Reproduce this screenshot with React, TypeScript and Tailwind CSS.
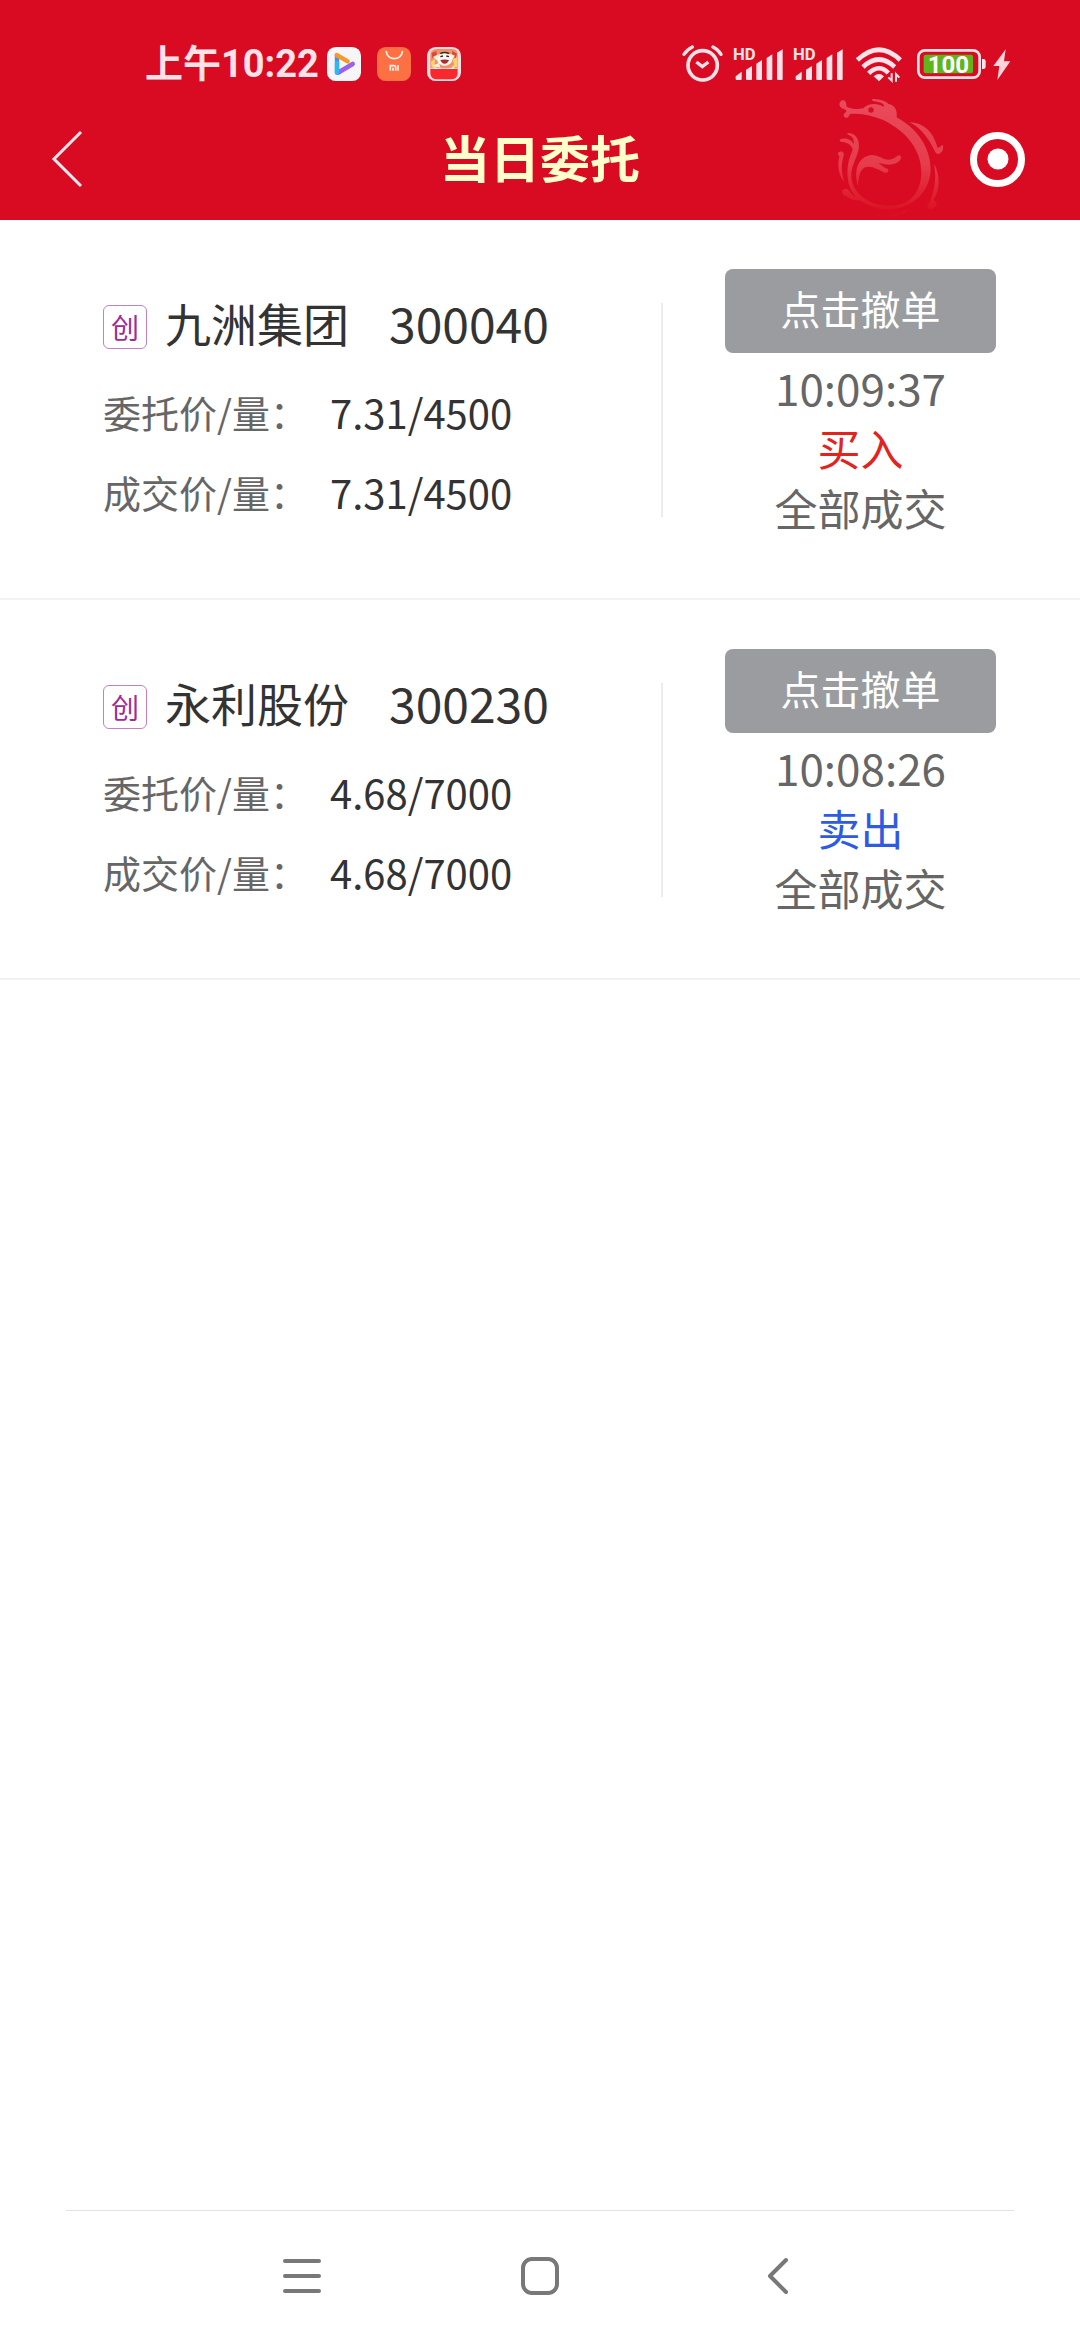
type Order = {
  name: string;
  code: string;
  entrust: string;
  deal: string;
  time: string;
  side: "买入" | "卖出";
  status: string;
};

const orders: Order[] = [
  { name: "九洲集团", code: "300040", entrust: "7.31/4500", deal: "7.31/4500", time: "10:09:37", side: "买入", status: "全部成交" },
  { name: "永利股份", code: "300230", entrust: "4.68/7000", deal: "4.68/7000", time: "10:08:26", side: "卖出", status: "全部成交" },
];

function VideoAppIcon() {
  return (
    <svg width="34" height="34" viewBox="0 0 102 102" aria-hidden="true">
      <rect width="102" height="102" rx="26" fill="#f6f5f7" />
      <path d="M30 26V76" stroke="#4a8cec" strokeWidth="13" strokeLinecap="round" />
      <path d="M33 77L77 51" stroke="#9a62e6" strokeWidth="14" strokeLinecap="round" />
      <path d="M29 24L62 43" stroke="#f79a2c" strokeWidth="13" strokeLinecap="round" />
      <path d="M30 48V77" stroke="#2fb6f2" strokeWidth="13" strokeLinecap="round" />
    </svg>
  );
}

function StoreAppIcon() {
  return (
    <svg width="34" height="34" viewBox="0 0 102 102" aria-hidden="true">
      <rect width="102" height="102" rx="26" fill="#fd7043" />
      <path d="M28 14C30 42 74 42 76 14" fill="none" stroke="#fff0e8" strokeWidth="5" strokeLinecap="round" />
      <path d="M40 71V56H51Q56 56 56 61V71M48 62V71M63 54V71" fill="none" stroke="#fff0e8" strokeWidth="5" />
    </svg>
  );
}

function GameAppIcon() {
  return (
    <svg width="34" height="34" viewBox="0 0 102 102" aria-hidden="true">
      <rect width="102" height="102" rx="26" fill="#f6dcdc" />
      <path d="M10 20Q14 6 30 6H74Q90 6 92 20V64H10Z" fill="#f0916a" />
      <path d="M10 66H92V80Q90 97 72 97H30Q12 97 10 80Z" fill="#f9282f" />
      <path d="M12 44L26 34L22 52L34 60L14 62ZM90 30L76 38L82 52L72 62L90 60Z" fill="#f8d26a" />
      <path d="M14 18L28 12L30 26L16 34ZM76 12L90 20L86 34L74 26Z" fill="#d94a36" />
      <path d="M18 30L34 22L30 40ZM84 26L70 20L74 40ZM16 56L36 48L40 62Z" fill="#fff1e6" />
      <ellipse cx="53" cy="36" rx="23" ry="20" fill="#fff5ee" />
      <path d="M38 18Q53 10 68 18L64 22Q53 16 42 22Z" fill="#3c2a28" />
      <path d="M40 29L48 27M58 27L66 29" stroke="#33211f" strokeWidth="4" />
      <path d="M40 39Q53 36 66 39Q62 50 53 50Q44 50 40 39Z" fill="#a82f2c" />
      <path d="M20 60Q52 72 82 60V66H20Z" fill="#fff1e6" />
    </svg>
  );
}

function AlarmIcon() {
  return (
    <svg width="42" height="40" viewBox="36 42 126 120" fill="none" stroke="#ffe1e8" aria-hidden="true">
      <circle cx="98" cy="106" r="44" strokeWidth="11" />
      <path d="M79 96L97 110L115 96" strokeWidth="10" />
      <path d="M42 73Q52 58 67 51M129 51Q144 58 153 73" strokeWidth="10" strokeLinecap="round" />
    </svg>
  );
}

function SignalIcon() {
  return (
    <svg width="52" height="40" viewBox="186 42 156 120" fill="#ffe1e8" role="img">
      <text x="189" y="90" fontSize="50" fontWeight="700" fontFamily="Roboto, sans-serif">HD</text>
      <path d="M197 147V139L215 125V147Q215 150 212 150H200Q197 150 197 147Z" />
      <path d="M228 147V119L246 108V147Q246 150 243 150H231Q228 150 228 147Z" />
      <path d="M259 147V101L276 90V147Q276 150 273 150H262Q259 150 259 147Z" />
      <path d="M290 147V84L307 73V147Q307 150 304 150H293Q290 150 290 147Z" />
      <path d="M321 147V68L338 58V147Q338 150 335 150H324Q321 150 321 147Z" />
    </svg>
  );
}

function WifiIcon() {
  return (
    <svg width="52" height="40" viewBox="546 42 156 120" fill="none" stroke="#ffe1e8" strokeWidth="14" aria-hidden="true">
      <path d="M562 90Q627 28 691 90" />
      <path d="M579 111Q627 66 674 111" />
      <path d="M596 130Q627 100 655 129" />
      <path d="M611 139Q627 125 642 139L627 154Z" fill="#ffe1e8" stroke="none" />
      <path d="M665 130V152L655 142M678 155V132L688 143" strokeWidth="6" />
    </svg>
  );
}

function BatteryIcon() {
  return (
    <svg width="100" height="40" viewBox="726 42 300 120" role="img">
      <rect x="745" y="61" width="184" height="82" rx="20" fill="none" stroke="#ffe1e8" strokeWidth="8" />
      <rect x="761" y="74" width="148" height="56" rx="6" fill="#5fb51c" />
      <path d="M936 87H940Q947 87 947 94V110Q947 117 940 117H936Z" fill="#ffe1e8" />
      <text x="835" y="129" fontSize="72" fontWeight="700" textAnchor="middle" fill="#ffffff" fontFamily="Roboto, sans-serif">100</text>
      <path d="M1007 58L970 108H988L982 150L1021 94H1002Z" fill="#ffd3da" />
    </svg>
  );
}

function DragonMark() {
  return (
    <svg width="108" height="122" viewBox="108 24 324 366" aria-hidden="true">
      <defs>
        <linearGradient id="dragon-fade" gradientUnits="userSpaceOnUse" x1="0" y1="24" x2="0" y2="386">
          <stop offset="0" stopColor="#e94b5b" />
          <stop offset="0.55" stopColor="#e63c4c" />
          <stop offset="0.9" stopColor="#dc1626" />
          <stop offset="1" stopColor="#d80b22" />
        </linearGradient>
      </defs>
      <g fill="url(#dragon-fade)" fillRule="evenodd">
        <path d="M150 72C180 68 215 75 250 90C320 125 365 180 364 250C362 310 330 342 280 347C220 352 165 320 155 270C148 230 175 200 177 170C178 140 160 128 142 129C140 134 150 136 155 140C168 155 160 175 152 195C142 220 140 250 145 275C155 330 215 360 275 358C345 352 392 300 392 235C390 170 350 115 290 82C292 60 285 45 265 42C262 35 240 26 217 27C213 33 225 34 235 36C250 40 255 46 250 50C235 40 205 38 190 55C175 58 155 58 140 50C138 42 140 36 134 32C124 28 116 38 119 47C122 55 132 56 138 60C142 66 134 68 131 74C130 82 138 86 144 82C148 79 148 74 150 72ZM213 52A8 8 0 1 0 213 68A8 8 0 1 0 213 52Z" />
        <path d="M121 148C138 142 158 148 166 172L160 180C152 162 140 156 124 156C118 154 118 150 121 148Z" />
        <path d="M113 190C120 180 135 183 131 198C122 225 125 250 133 276C115 255 112 225 118 200Z" />
        <path d="M128 300C138 292 148 298 152 310C165 322 185 325 198 328C180 335 150 330 138 318C128 318 125 308 128 300Z" />
        <path d="M222 372C260 378 300 370 328 356C310 380 260 390 222 372Z" />
        <path d="M328 96C370 98 400 125 412 172C418 176 422 166 429 165C432 185 420 196 408 190C395 165 375 120 328 96Z" />
        <path d="M402 222C420 250 422 300 400 330C410 336 414 344 406 352C395 362 383 358 382 348C400 320 412 270 402 222Z" />
        <path d="M174 287C158 235 180 198 215 195C240 195 250 213 275 208C290 203 290 197 298 196C306 200 304 208 297 214C280 228 260 225 235 218C250 230 255 234 262 236C270 242 262 250 254 248C235 240 215 225 195 232C180 240 176 260 174 287Z" />
      </g>
    </svg>
  );
}

function OrderRow({ order }: { order: Order }) {
  return (
    <li className="flex h-[380px] border-b-2 border-[#f3f3f3]">
      <div className="flex flex-1 flex-col pt-[70px] pl-[103px]">
        <div className="flex h-[64px] items-center text-[#333333]">
          <span className="mt-2.5 flex size-[44px] items-center justify-center rounded-md border border-[#c77fc4] text-[28px] leading-none font-normal text-[#a02a96]">创</span>
          <h2 className="ml-[18px] text-[46px] leading-none">{order.name}</h2>
          <span className="ml-10 text-[48px] leading-none">{order.code}</span>
        </div>
        <dl className="mt-[18px] grid grid-cols-[227px_auto] justify-start leading-[80px]">
          <dt className="text-[38px] text-[#666666]">委托价/量：</dt>
          <dd className="text-[40px] text-[#333333]">{order.entrust}</dd>
          <dt className="text-[38px] text-[#666666]">成交价/量：</dt>
          <dd className="text-[40px] text-[#333333]">{order.deal}</dd>
        </dl>
      </div>
      <div className="mt-[83px] h-[214px] w-0.5 bg-[#ececec]" />
      <div className="flex w-[417px] flex-col items-center pt-[49px] pr-[22px] text-[43px] leading-[60px] text-[#666666]">
        <button type="button" className="mb-1 h-[84px] w-[271px] rounded-lg bg-[#9b9ca0] pb-1.5 text-[40px] leading-none text-white">点击撤单</button>
        <time className="text-[44px]">{order.time}</time>
        <span className={order.side === "买入" ? "text-[#e2231e]" : "text-[#2f5be3]"}>{order.side}</span>
        <span>{order.status}</span>
      </div>
    </li>
  );
}

export default function App() {
  return (
    <div className="flex min-h-screen flex-col bg-white font-['Noto_Sans_CJK_SC',sans-serif]">
      <header className="bg-[#d80b22]">
        <div className="flex h-[98px] items-center justify-between pt-[30px] pr-[68px] pl-[145px]">
          <div className="flex items-center gap-4">
            <span className="-mr-2 font-['Roboto','Noto_Sans_CJK_SC',sans-serif] text-[38px] leading-none font-bold text-[#ffe1e8]">上午10:22</span>
            <VideoAppIcon />
            <StoreAppIcon />
            <GameAppIcon />
          </div>
          <div className="flex items-center gap-2">
            <AlarmIcon />
            <SignalIcon />
            <SignalIcon />
            <WifiIcon />
            <BatteryIcon />
          </div>
        </div>
        <div className="grid h-[122px] grid-cols-[1fr_auto_1fr] items-center">
          <button type="button" aria-label="返回" className="ml-[50px] justify-self-start">
            <svg width="34" height="58" viewBox="0 0 34 58" fill="none" stroke="#ffe9ee" strokeWidth="3">
              <path d="M31 2L4 29L31 56" />
            </svg>
          </button>
          <h1 className="pb-1.5 text-[50px] leading-none font-bold text-[#ffffcc]">当日委托</h1>
          <div className="flex items-center gap-[26px] justify-self-end pr-[55px]">
            <DragonMark />
            <button type="button" aria-label="关闭">
              <svg width="55" height="55" viewBox="0 0 55 55">
                <circle cx="27.5" cy="27.5" r="24" fill="none" stroke="#ffffff" strokeWidth="7" />
                <circle cx="28" cy="27" r="10.5" fill="#ffffff" />
              </svg>
            </button>
          </div>
        </div>
      </header>

      <main className="flex-1">
        <ul>
          {orders.map((order) => (
            <OrderRow key={order.code} order={order} />
          ))}
        </ul>
      </main>

      <nav className="mx-[66px] flex h-[130px] items-center justify-center gap-[198px] border-t border-[#e2e2e2]">
        <button type="button" aria-label="菜单">
          <svg width="40" height="40" viewBox="0 0 40 40" stroke="#787878" strokeWidth="4" strokeLinecap="round">
            <path d="M3 5H37M3 20H37M3 35H37" />
          </svg>
        </button>
        <button type="button" aria-label="主页">
          <svg width="40" height="40" viewBox="0 0 40 40" fill="none" stroke="#787878" strokeWidth="4">
            <rect x="3" y="3" width="34" height="34" rx="9" />
          </svg>
        </button>
        <button type="button" aria-label="后退">
          <svg width="40" height="40" viewBox="0 0 40 40" fill="none" stroke="#787878" strokeWidth="4" strokeLinecap="round" strokeLinejoin="round">
            <path d="M28 4L12 20L28 36" />
          </svg>
        </button>
      </nav>
    </div>
  );
}
